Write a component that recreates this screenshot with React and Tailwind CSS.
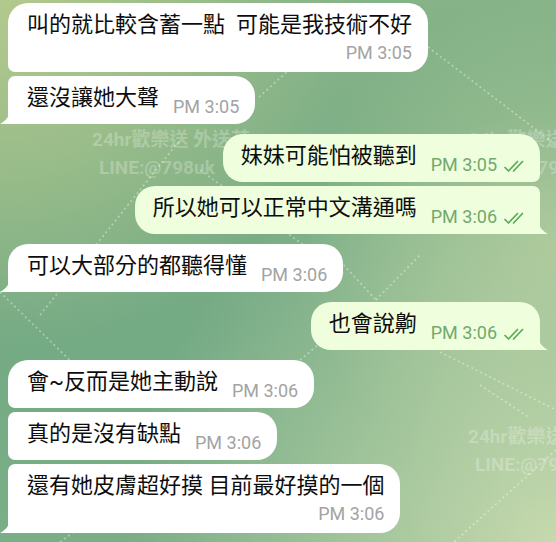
import React from 'react';

const messages = [
  { side: 'in', text: '叫的就比較含蓄一點  可能是我技術不好', time: 'PM 3:05', pos: 'first', twoLine: true },
  { side: 'in', text: '還沒讓她大聲', time: 'PM 3:05', pos: 'last' },
  { side: 'out', text: '妹妹可能怕被聽到', time: 'PM 3:05', pos: 'first', gap: true },
  { side: 'out', text: '所以她可以正常中文溝通嗎', time: 'PM 3:06', pos: 'last' },
  { side: 'in', text: '可以大部分的都聽得懂', time: 'PM 3:06', pos: 'single', gap: true },
  { side: 'out', text: '也會說齁', time: 'PM 3:06', pos: 'single', gap: true },
  { side: 'in', text: '會~反而是她主動說', time: 'PM 3:06', pos: 'first', gap: true },
  { side: 'in', text: '真的是沒有缺點', time: 'PM 3:06', pos: 'middle' },
  { side: 'in', text: '還有她皮膚超好摸 目前最好摸的一個', time: 'PM 3:06', pos: 'last', twoLine: true },
];

const lines = [
  [428, 47, 556, 145],
  [259, 97, 300, 60],
  [40, 315, 180, 140],
  [200, 170, 345, 275],
  [0, 292, 90, 380],
  [330, 250, 376, 300],
  [376, 300, 420, 255],
  [300, 360, 330, 335],
  [440, 352, 556, 410],
  [480, 385, 530, 418],
  [556, 450, 454, 542],
  [60, 542, 110, 505],
];

function Ticks() {
  return (
    <svg width="24" height="13" viewBox="0 0 24 13" fill="none" className="ml-[6px] mb-[2px]">
      <path d="M2 7.5 L5.5 11 L14.5 1.5" stroke="#5aab58" strokeWidth="1.7" strokeLinecap="round" strokeLinejoin="round" />
      <path d="M10.5 11 L19.5 1.5" stroke="#5aab58" strokeWidth="1.7" strokeLinecap="round" />
    </svg>
  );
}

function Tail({ side }) {
  if (side === 'in') {
    return (
      <svg width="10" height="16" viewBox="0 0 10 16" className="absolute bottom-0 left-[-8px]">
        <path d="M10 0 C10 8 6 13 0 16 L10 16 Z" fill="#ffffff" />
      </svg>
    );
  }
  return (
    <svg width="10" height="16" viewBox="0 0 10 16" className="absolute bottom-0 right-[-8px]">
      <path d="M0 0 C0 8 4 13 10 16 L0 16 Z" fill="#effedd" />
    </svg>
  );
}

function Bubble({ side, text, time, pos, twoLine }) {
  const isIn = side === 'in';
  const startsGroup = pos === 'first' || pos === 'single';
  const endsGroup = pos === 'last' || pos === 'single';

  let corners;
  if (isIn) {
    corners = `rounded-r-[20px] ${startsGroup ? 'rounded-tl-[20px]' : 'rounded-tl-[7px]'} ${endsGroup ? 'rounded-bl-none' : 'rounded-bl-[7px]'}`;
  } else {
    corners = `rounded-l-[20px] ${startsGroup ? 'rounded-tr-[20px]' : 'rounded-tr-[7px]'} ${endsGroup ? 'rounded-br-none' : 'rounded-br-[7px]'}`;
  }

  const timeCls = isIn ? 'text-[#a3a3a3]' : 'text-[#72a96d]';

  return (
    <div
      className={`relative ${corners} ${isIn ? 'bg-white pl-[19px] pr-[16px]' : 'bg-[#effedd] pl-[18px] pr-[13px]'} ${twoLine ? 'h-[69px]' : 'h-[48px]'}`}
    >
      {twoLine ? (
        <div className="flex flex-col pt-[9px]">
          <span className="text-[22px] leading-[26px] text-[#0d0d0d] whitespace-pre">{text}</span>
          <span className={`self-end mt-[5px] text-[18px] leading-[20px] ${timeCls}`}>{time}</span>
        </div>
      ) : (
        <div className="flex items-start pt-[9px]">
          <span className="text-[22px] leading-[26px] text-[#0d0d0d] whitespace-pre">{text}</span>
          <span className={`flex items-end ml-[14px] mt-[12px] text-[18px] leading-[20px] ${timeCls}`}>
            {time}
            {!isIn && <Ticks />}
          </span>
        </div>
      )}
      {endsGroup && <Tail side={side} />}
    </div>
  );
}

function Watermark({ className }) {
  return (
    <div className={`absolute font-bold text-[19px] leading-[28px] text-white/25 whitespace-nowrap ${className}`}>
      <div>24hr歡樂送 外送茶</div>
      <div className="ml-[7px]">LINE:@798uk</div>
    </div>
  );
}

export default function App() {
  return (
    <div
      className="relative w-[556px] h-[542px] overflow-hidden bg-[radial-gradient(circle_at_0%_0%,#b3c98d_0%,transparent_45%),radial-gradient(circle_at_100%_100%,#c6d9ae_0%,transparent_55%),radial-gradient(circle_at_100%_45%,#a3c495_0%,transparent_40%),linear-gradient(180deg,#86b388_0%,#74aa84_60%,#7aae86_100%)]"
      style={{ fontFamily: 'Roboto, "Noto Sans CJK TC", sans-serif' }}
    >
      {/* pattern + watermark */}
      <svg className="absolute inset-0" width="556" height="542">
        {lines.map(([x1, y1, x2, y2], i) => (
          <line
            key={i}
            x1={x1}
            y1={y1}
            x2={x2}
            y2={y2}
            stroke="#ffffff"
            strokeOpacity="0.4"
            strokeWidth="1.6"
            strokeDasharray="2 3"
          />
        ))}
      </svg>
      <Watermark className="left-[92px] top-[126px]" />
      <Watermark className="left-[468px] top-[126px]" />
      <Watermark className="left-[468px] top-[423px]" />

      <div className="relative flex flex-col pt-[3px]">
        {messages.map((m, i) => (
          <div
            key={i}
            className={`flex ${m.side === 'in' ? 'justify-start pl-[8px]' : 'justify-end pr-[16px]'} ${i === 0 ? '' : m.gap ? 'mt-[10px]' : 'mt-[4px]'}`}
          >
            <Bubble {...m} />
          </div>
        ))}
      </div>
    </div>
  );
}
